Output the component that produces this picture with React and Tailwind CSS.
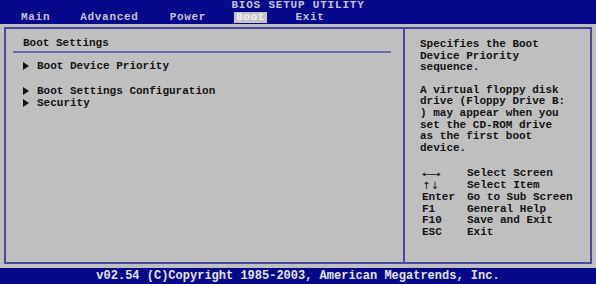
export default function App() {
  const help1 = ["Specifies the Boot", "Device Priority", "sequence."];
  const help2 = [
    "A virtual floppy disk",
    "drive (Floppy Drive B:",
    ") may appear when you",
    "set the CD-ROM drive",
    "as the first boot",
    "device.",
  ];
  const legend = [
    ["Enter", "Go to Sub Screen"],
    ["F1", "General Help"],
    ["F10", "Save and Exit"],
    ["ESC", "Exit"],
  ];
  const Tri = () => (
    <span className="w-[15px] flex items-center">
      <span className="ml-[1px] w-0 h-0 border-y-[4px] border-y-transparent border-l-[6px] border-l-[#141414]" />
    </span>
  );
  const sym = { fontFamily: '"DejaVu Sans", sans-serif' };
  return (
    <div
      className="w-[596px] h-[284px] bg-[#bfbfbf] flex flex-col overflow-hidden text-[#141414]"
      style={{ fontFamily: '"Liberation Mono", "Courier New", monospace' }}
    >
      {/* top bar */}
      <div className="h-[24px] bg-[#08088a] flex flex-col font-bold text-[#c4c4dc]">
        <div className="h-[11px] leading-[11px] text-[11px] tracking-[0.8px] text-center">BIOS SETUP UTILITY</div>
        <div className="h-[13px] leading-[13px] text-[11px] tracking-[0.7px] flex items-start">
          <span className="ml-[21px]">Main</span>
          <span className="ml-[30px]">Advanced</span>
          <span className="ml-[31px]">Power</span>
          <span className="ml-[28px] mt-[1px] px-[2px] bg-[#c4c4c4] text-[#eeeef6] leading-[11px]">Boot</span>
          <span className="ml-[28px]">Exit</span>
        </div>
      </div>

      {/* main panel */}
      <div className="flex-1 px-[4px] pt-[3px] pb-[4px] flex">
        <div className="flex-1 flex border-2 border-[#48489c] text-[11px] font-bold">
          {/* left */}
          <div className="w-[399px] flex flex-col border-r-2 border-[#48489c]">
            <div className="pt-[8px] pl-[17px] leading-[12px]">Boot Settings</div>
            <div className="mt-[2px] ml-[7px] mr-[12px] h-[2px] bg-[#6a6ab0]" />
            <div className="mt-[7px] pl-[16px] flex flex-col leading-[12px]">
              <div className="flex items-center">
                <Tri />
                <span>Boot Device Priority</span>
              </div>
              <div className="flex items-center mt-[13px]">
                <Tri />
                <span>Boot Settings Configuration</span>
              </div>
              <div className="flex items-center">
                <Tri />
                <span>Security</span>
              </div>
            </div>
          </div>
          {/* right */}
          <div className="flex-1 flex flex-col pl-[15px] pt-[10px] leading-[11.7px]">
            {help1.map((t) => (
              <div key={t}>{t}</div>
            ))}
            <div className="mt-[10.5px]">
              {help2.map((t) => (
                <div key={t}>{t}</div>
              ))}
            </div>
            <div className="mt-[13px] pl-[2px] leading-[11.9px]">
              <div className="flex h-[11.9px] items-center">
                <span className="w-[45px] flex">
                  <span
                    className="inline-block text-[9px] font-normal leading-[10px] scale-x-150 origin-left text-[#141414]"
                    style={sym}
                  >
                    {"\u27F7"}
                  </span>
                </span>
                <span>Select Screen</span>
              </div>
              <div className="flex h-[11.9px] items-center">
                <span className="w-[45px] text-[10px] font-normal leading-[10px] text-[#141414]" style={sym}>
                  {"\u2191\u2193"}
                </span>
                <span>Select Item</span>
              </div>
              {legend.map(([k, d]) => (
                <div key={d} className="flex h-[11.9px] items-center">
                  <span className="w-[45px]">{k}</span>
                  <span>{d}</span>
                </div>
              ))}
            </div>
          </div>
        </div>
      </div>

      {/* bottom bar */}
      <div className="h-[16px] bg-[#08088a] text-[#e4e4ec] text-[12px] font-bold leading-[16px] text-center">
        v02.54 (C)Copyright 1985-2003, American Megatrends, Inc.
      </div>
    </div>
  );
}
